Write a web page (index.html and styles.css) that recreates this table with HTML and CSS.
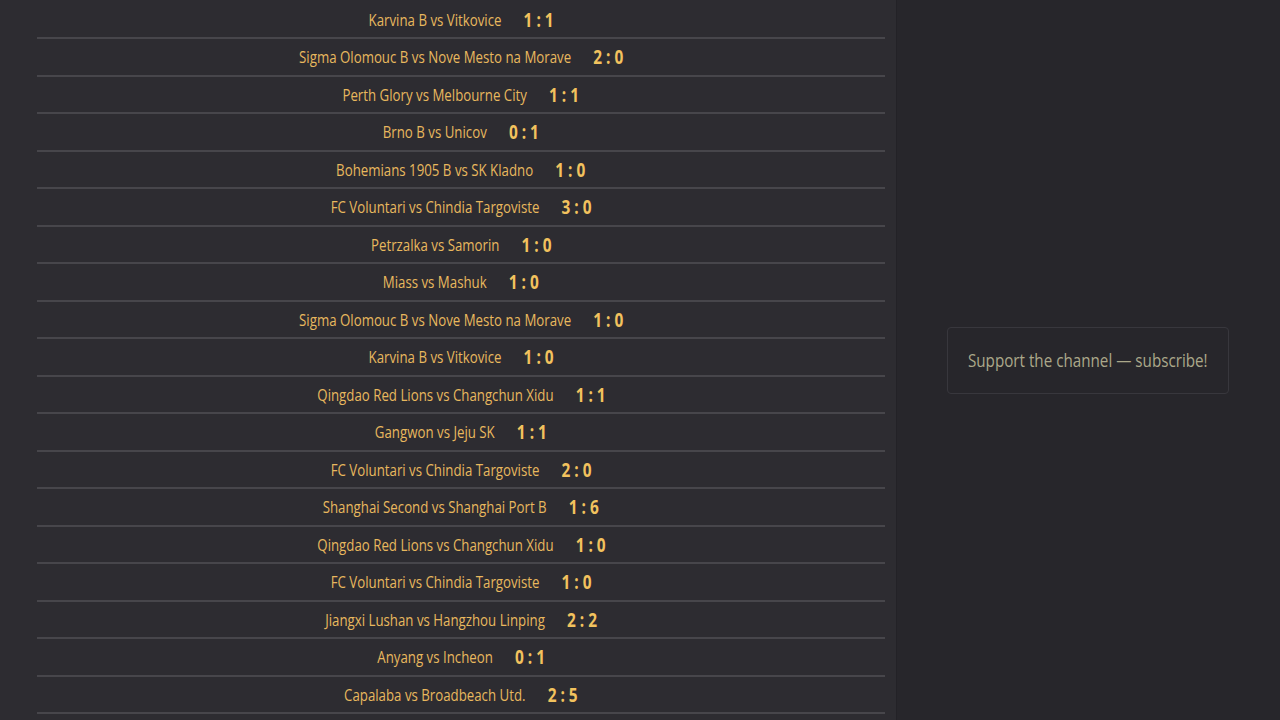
FILE: index.html
```html
<!DOCTYPE html>
<html lang="en">
<head>
<meta charset="utf-8">
<title>Match results</title>
<link rel="stylesheet" href="styles.css">
</head>
<body>
<div class="page">
  <main class="results">
    <div class="row"><div class="match"><span class="teams">Karvina B vs Vitkovice</span><span class="score">1 : 1</span></div></div>
    <div class="row"><div class="match"><span class="teams">Sigma Olomouc B vs Nove Mesto na Morave</span><span class="score">2 : 0</span></div></div>
    <div class="row"><div class="match"><span class="teams">Perth Glory vs Melbourne City</span><span class="score">1 : 1</span></div></div>
    <div class="row"><div class="match"><span class="teams">Brno B vs Unicov</span><span class="score">0 : 1</span></div></div>
    <div class="row"><div class="match"><span class="teams">Bohemians 1905 B vs SK Kladno</span><span class="score">1 : 0</span></div></div>
    <div class="row"><div class="match"><span class="teams">FC Voluntari vs Chindia Targoviste</span><span class="score">3 : 0</span></div></div>
    <div class="row"><div class="match"><span class="teams">Petrzalka vs Samorin</span><span class="score">1 : 0</span></div></div>
    <div class="row"><div class="match"><span class="teams">Miass vs Mashuk</span><span class="score">1 : 0</span></div></div>
    <div class="row"><div class="match"><span class="teams">Sigma Olomouc B vs Nove Mesto na Morave</span><span class="score">1 : 0</span></div></div>
    <div class="row"><div class="match"><span class="teams">Karvina B vs Vitkovice</span><span class="score">1 : 0</span></div></div>
    <div class="row"><div class="match"><span class="teams">Qingdao Red Lions vs Changchun Xidu</span><span class="score">1 : 1</span></div></div>
    <div class="row"><div class="match"><span class="teams">Gangwon vs Jeju SK</span><span class="score">1 : 1</span></div></div>
    <div class="row"><div class="match"><span class="teams">FC Voluntari vs Chindia Targoviste</span><span class="score">2 : 0</span></div></div>
    <div class="row"><div class="match"><span class="teams">Shanghai Second vs Shanghai Port B</span><span class="score">1 : 6</span></div></div>
    <div class="row"><div class="match"><span class="teams">Qingdao Red Lions vs Changchun Xidu</span><span class="score">1 : 0</span></div></div>
    <div class="row"><div class="match"><span class="teams">FC Voluntari vs Chindia Targoviste</span><span class="score">1 : 0</span></div></div>
    <div class="row"><div class="match"><span class="teams">Jiangxi Lushan vs Hangzhou Linping</span><span class="score">2 : 2</span></div></div>
    <div class="row"><div class="match"><span class="teams">Anyang vs Incheon</span><span class="score">0 : 1</span></div></div>
    <div class="row"><div class="match"><span class="teams">Capalaba vs Broadbeach Utd.</span><span class="score">2 : 5</span></div></div>
  </main>
  <aside class="sidebar">
    <div class="promo"><span class="promo-text">Support the channel — subscribe!</span></div>
  </aside>
</div>
</body>
</html>
```
FILE: styles.css
```css
html, body {
  margin: 0;
  padding: 0;
  height: 720px;
  overflow: hidden;
  background: #27262b;
  font-family: "Open Sans", "Noto Sans", sans-serif;
}

.page {
  display: flex;
  height: 720px;
}

.results {
  width: 848px;
  padding: 1.5px 11px 0 37px;
  background: #2d2c31;
  border-right: 1px solid #232227;
}

.row {
  height: 35.5px;
  border-bottom: 2px solid #47464b;
  display: flex;
  align-items: center;
  justify-content: center;
}

.match {
  display: flex;
  align-items: center;
  gap: 28px;
  transform: scaleX(0.79);
  white-space: nowrap;
}

.teams {
  color: #e8b85e;
  font-size: 16.8px;
}

.score {
  color: #f2c25e;
  font-size: 19.5px;
  font-weight: 700;
}

.sidebar {
  flex: 1;
  display: flex;
  align-items: center;
  justify-content: center;
  padding-right: 2px;
}

.promo {
  width: 280px;
  height: 65px;
  border: 1px solid #38373d;
  border-radius: 4px;
  display: flex;
  align-items: center;
  justify-content: center;
}

.promo-text {
  color: #aba88a;
  font-size: 19px;
  transform: scaleX(0.8);
  white-space: nowrap;
}
```
